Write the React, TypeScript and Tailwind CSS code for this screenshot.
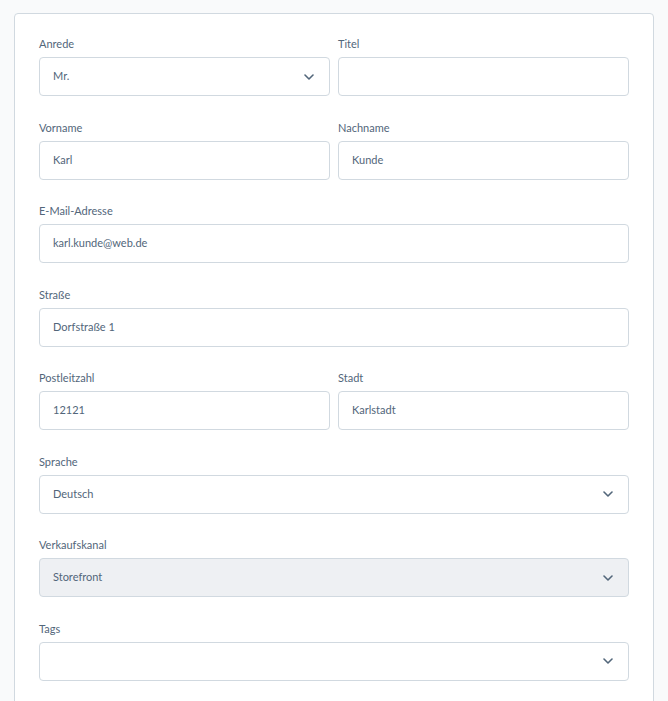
import React from "react";

const font = { fontFamily: "Lato, 'Noto Sans', sans-serif" };

function Chevron() {
  return (
    <svg width="10" height="6" viewBox="0 0 10 6" className="absolute right-[15px] top-1/2 -translate-y-1/2 text-[#52667a]">
      <path d="M1 1l4 4 4-4" fill="none" stroke="currentColor" strokeWidth="1.6" strokeLinecap="round" strokeLinejoin="round" />
    </svg>
  );
}

function Field({ label, value = "", select = false, disabled = false }: { label: string; value?: string; select?: boolean; disabled?: boolean }) {
  return (
    <div className="flex flex-col min-w-0">
      <label className="text-[11px] leading-[16px] text-[#52667a] mb-[5px]">{label}</label>
      <div
        className={`relative h-[39px] rounded-[4px] border border-[#d1d9e0] flex items-center px-[13px] text-[11px] text-[#52667a] ${
          disabled ? "bg-[#eef0f3]" : "bg-white"
        }`}
      >
        <span>{value}</span>
        {select && <Chevron />}
      </div>
    </div>
  );
}

export default function App() {
  return (
    <div className="min-h-[701px] h-[701px] overflow-hidden bg-[#f9fafb] pt-[13px] pl-[14px] pr-[14px]" style={font}>
      <div className="bg-white border border-[#d1d9e0] rounded-[4px] pt-[22px] px-[24px] pb-[30px]">
        <div className="flex flex-col gap-[23.5px]">
          <div className="grid grid-cols-2 gap-[8px]">
            <Field label="Anrede" value="Mr." select />
            <Field label="Titel" />
          </div>
          <div className="grid grid-cols-2 gap-[8px]">
            <Field label="Vorname" value="Karl" />
            <Field label="Nachname" value="Kunde" />
          </div>
          <Field label="E-Mail-Adresse" value="karl.kunde@web.de" />
          <Field label="Straße" value="Dorfstraße 1" />
          <div className="grid grid-cols-2 gap-[8px]">
            <Field label="Postleitzahl" value="12121" />
            <Field label="Stadt" value="Karlstadt" />
          </div>
          <Field label="Sprache" value="Deutsch" select />
          <Field label="Verkaufskanal" value="Storefront" select disabled />
          <Field label="Tags" select />
        </div>
      </div>
    </div>
  );
}
